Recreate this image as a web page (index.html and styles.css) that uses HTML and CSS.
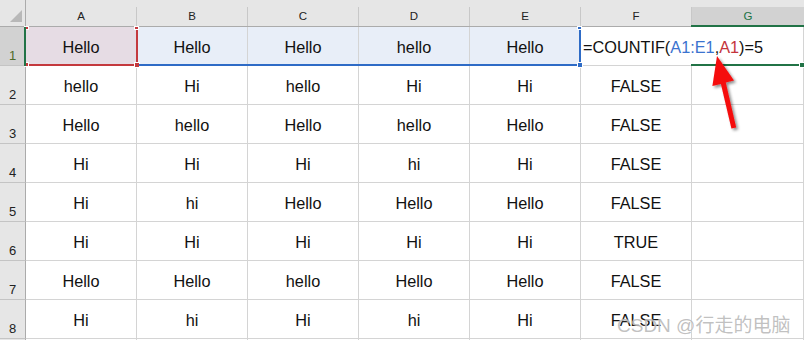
FILE: index.html
```html
<!DOCTYPE html>
<html>
<head>
<title>COUNTIF</title>
<meta charset="utf-8"/>
<link rel="stylesheet" href="styles.css">
</head>
<body>
<div class="sheet">
<div class="corner"><div class="tri"></div></div>
<div class="colhead"><div class="lab">A</div></div>
<div class="colhead"><div class="lab">B</div></div>
<div class="colhead"><div class="lab">C</div></div>
<div class="colhead"><div class="lab">D</div></div>
<div class="colhead"><div class="lab">E</div></div>
<div class="colhead"><div class="lab">F</div></div>
<div class="colhead on"><div class="lab">G</div></div>

<div class="rowhead on">1</div>
<div class="cell ref-a">Hello</div>
<div class="cell ref-b">Hello</div>
<div class="cell ref-b">Hello</div>
<div class="cell ref-b">hello</div>
<div class="cell ref-b">Hello</div>
<div class="cell formula">=COUNTIF(<span class="blue">A1:E1</span>,<span class="red">A1</span>)=5</div>
<div class="cell"></div>

<div class="rowhead">2</div>
<div class="cell">hello</div><div class="cell">Hi</div><div class="cell">hello</div><div class="cell">Hi</div><div class="cell">Hi</div><div class="cell">FALSE</div><div class="cell"></div>
<div class="rowhead">3</div>
<div class="cell">Hello</div><div class="cell">hello</div><div class="cell">Hello</div><div class="cell">hello</div><div class="cell">Hello</div><div class="cell">FALSE</div><div class="cell"></div>
<div class="rowhead">4</div>
<div class="cell">Hi</div><div class="cell">Hi</div><div class="cell">Hi</div><div class="cell">hi</div><div class="cell">Hi</div><div class="cell">FALSE</div><div class="cell"></div>
<div class="rowhead">5</div>
<div class="cell">Hi</div><div class="cell">hi</div><div class="cell">Hello</div><div class="cell">Hello</div><div class="cell">Hello</div><div class="cell">FALSE</div><div class="cell"></div>
<div class="rowhead">6</div>
<div class="cell">Hi</div><div class="cell">Hi</div><div class="cell">Hi</div><div class="cell">Hi</div><div class="cell">Hi</div><div class="cell">TRUE</div><div class="cell"></div>
<div class="rowhead">7</div>
<div class="cell">Hello</div><div class="cell">Hello</div><div class="cell">hello</div><div class="cell">Hello</div><div class="cell">Hello</div><div class="cell">FALSE</div><div class="cell"></div>
<div class="rowhead">8</div>
<div class="cell">Hi</div><div class="cell">hi</div><div class="cell">Hi</div><div class="cell">hi</div><div class="cell">Hi</div><div class="cell">FALSE</div><div class="cell"></div>
<div class="rowhead"></div>
<div class="cell"></div><div class="cell"></div><div class="cell"></div><div class="cell"></div><div class="cell"></div><div class="cell"></div><div class="cell"></div>

<!-- reference borders drawn over the grid -->
<div class="sel red-r"></div>
<div class="sel red-b"></div>
<div class="knob red k-a1"></div>
<div class="knob red k-a2"></div>
<div class="knob red k-a3"></div>
<div class="knob red k-a4"></div>
<div class="sel blue-r"></div>
<div class="sel blue-b"></div>
<div class="knob blue k-b1"></div>
<div class="knob blue k-b2"></div>
<div class="sel green-l"></div>
<div class="sel green-t"></div>
<div class="sel green-b"></div>
<div class="knob green k-g"></div>

<svg class="arrow" width="804" height="340" viewBox="0 0 804 340">
<defs>
<filter id="sh" x="-50%" y="-50%" width="200%" height="200%">
<feGaussianBlur in="SourceAlpha" stdDeviation="1.6"/>
<feOffset dx="2" dy="2" result="b"/>
<feComponentTransfer><feFuncA type="linear" slope="0.45"/></feComponentTransfer>
<feMerge><feMergeNode/><feMergeNode in="SourceGraphic"/></feMerge>
</filter>
</defs>
<polygon filter="url(#sh)" fill="#f50d0d" points="717,56 734,80.5 725.8,82.6 736.2,127.4 731.4,128.6 720.9,83.9 712.4,86"/>
</svg>

<div class="mark">CSDN @行走的电脑</div>
</div>
</body>
</html>
```

FILE: styles.css
```css
body {
margin: 0;
background-color: white;
overflow: hidden;
}
* {
box-sizing: border-box;
font-family: 'Liberation Sans', Arial, 'Noto Sans CJK SC', sans-serif;
}
.sheet {
position: relative;
display: grid;
grid-template-columns: 26px repeat(6, 111px) 1fr;
grid-template-rows: 27px;
grid-auto-rows: 39px;
width: 804px;
height: 340px;
overflow: hidden;
}
.corner {
background-color: #e6e6e6;
border-right: 1px solid #ababab;
border-bottom: 1px solid #ababab;
position: relative;
}
.tri {
position: absolute;
right: 3px;
bottom: 4px;
width: 0;
height: 0;
border-left: 12px solid transparent;
border-bottom: 12px solid #b8b8b8;
}
.colhead {
background-color: #e6e6e6;
border-bottom: 1px solid #ababab;
padding-top: 7px;
}
.colhead .lab {
height: 19px;
border-right: 1px solid #c8c8c8;
display: flex;
align-items: center;
justify-content: center;
font-size: 11.5px;
color: #222;
padding-bottom: 2px;
}
.colhead.on .lab {
background-color: #d2d2d2;
color: #217346;
border-right: 0;
}
.rowhead {
background-color: #e6e6e6;
border-right: 1px solid #ababab;
border-bottom: 1px solid #c4c4c4;
display: flex;
align-items: flex-end;
justify-content: center;
font-size: 13px;
color: #222;
padding-bottom: 2px;
}
.rowhead.on {
background-color: #d2d2d2;
color: #4d6b2a;
}
.cell {
border-right: 1px solid #d4d4d4;
border-bottom: 1px solid #d4d4d4;
display: flex;
align-items: center;
justify-content: center;
font-size: 16.3px;
color: #111;
padding-top: 3px;
white-space: nowrap;
}
.ref-a {
background-color: #e6dce4;
}
.ref-b {
background-color: #e8eef8;
}
.formula {
justify-content: flex-start;
padding-left: 2px;
border-right: 0;
overflow: visible;
}
.blue {
color: #3b73cf;
}
.red {
color: #c4343b;
}
.sel, .knob {
position: absolute;
}
.red-r { left: 136px; top: 27px; width: 2px; height: 39px; background: #c4393e; }
.red-b { left: 26px; top: 64px; width: 111px; height: 2px; background: #c4393e; }
.knob { width: 5px; height: 5px; border: 1px solid white; }
.knob.red { background: #c4393e; }
.knob.blue { background: #2e6bc6; }
.knob.green { background: #217346; }
.k-a1 { left: 24px; top: 26px; height: 4px; }
.k-a2 { left: 24px; top: 62px; }
.k-a3 { left: 134px; top: 26px; height: 4px; }
.k-a4 { left: 134px; top: 62px; width: 6px; height: 6px; }
.blue-r { left: 579px; top: 27px; width: 2px; height: 39px; background: #2e6bc6; }
.blue-b { left: 139px; top: 64px; width: 441px; height: 2px; background: #2e6bc6; }
.k-b1 { left: 577px; top: 26px; height: 4px; }
.k-b2 { left: 577px; top: 62px; width: 6px; height: 6px; }
.green-l { left: 24px; top: 27px; width: 2px; height: 39px; background: #217346; }
.green-t { left: 691px; top: 25px; width: 113px; height: 2px; background: #217346; }
.green-b { left: 691px; top: 64px; width: 109px; height: 2px; background: #217346; }
.k-g { left: 799px; top: 62px; width: 6px; height: 6px; }
.arrow {
position: absolute;
left: 0;
top: 0;
pointer-events: none;
}
.mark {
position: absolute;
left: 617px;
top: 310px;
font-size: 19px;
color: rgba(140, 140, 140, 0.55);
text-shadow: 0 0 1px rgba(255, 255, 255, 0.9);
white-space: nowrap;
}
```
